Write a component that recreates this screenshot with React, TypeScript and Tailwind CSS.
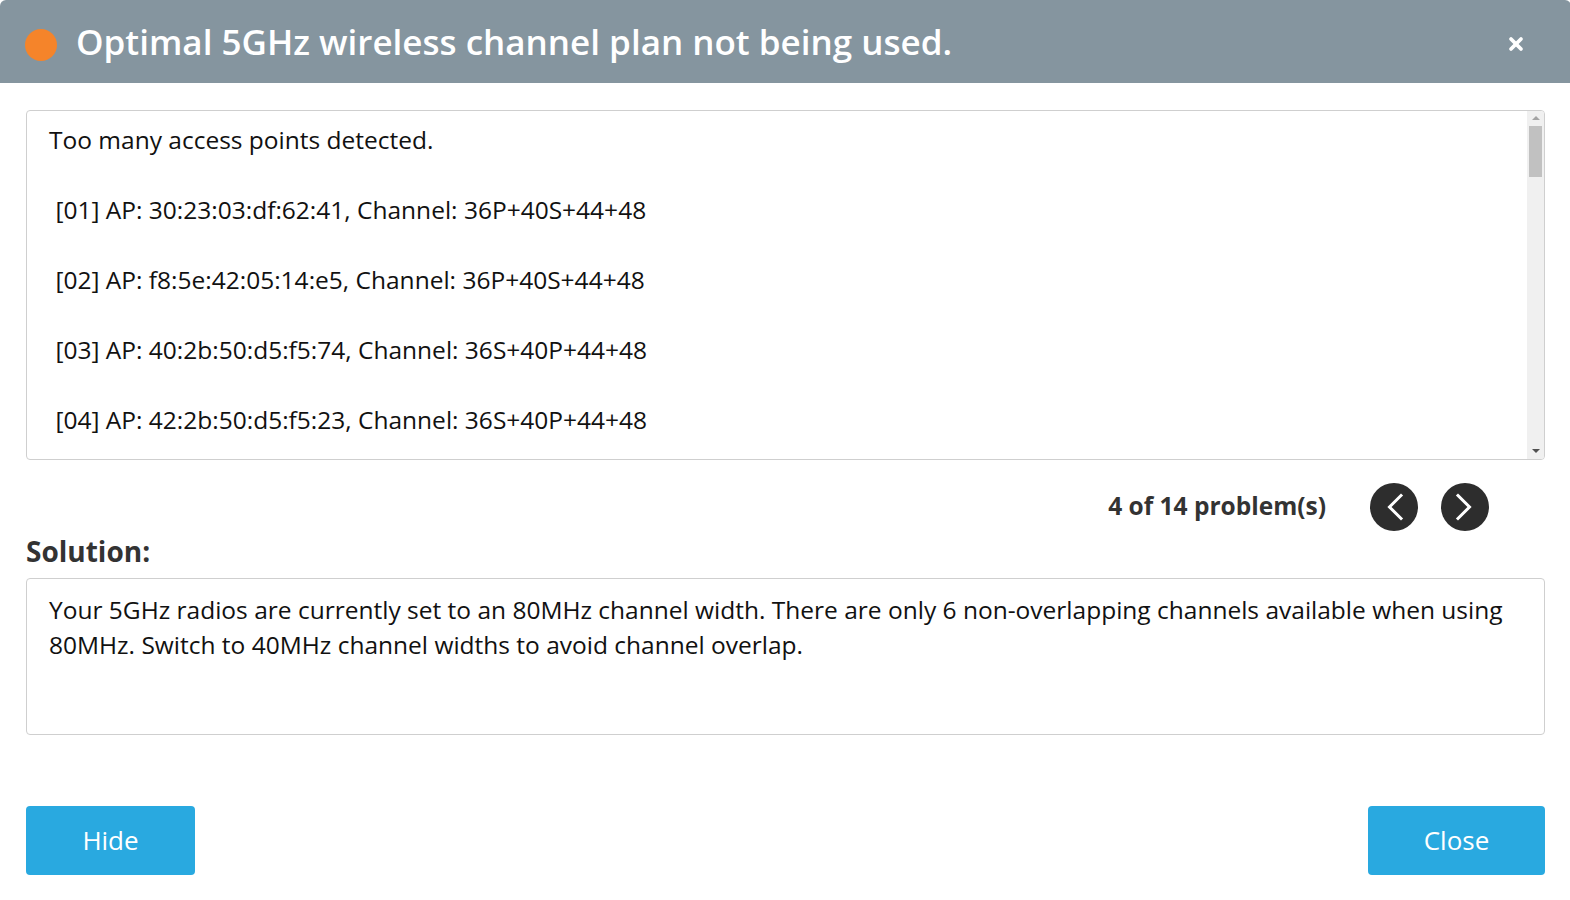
import { X } from "lucide-react";

const aps = [
  "[01] AP: 30:23:03:df:62:41, Channel: 36P+40S+44+48",
  "[02] AP: f8:5e:42:05:14:e5, Channel: 36P+40S+44+48",
  "[03] AP: 40:2b:50:d5:f5:74, Channel: 36S+40P+44+48",
  "[04] AP: 42:2b:50:d5:f5:23, Channel: 36S+40P+44+48",
];

function Arrow({ dir }: { dir: "left" | "right" }) {
  return (
    <svg width="48" height="48" viewBox="0 0 48 48" fill="none">
      <polyline
        points={dir === "left" ? "31,12.5 19.5,24 31,35.5" : "17,12.5 28.5,24 17,35.5"}
        stroke="white"
        strokeWidth="3"
        strokeLinecap="square"
        strokeLinejoin="miter"
      />
    </svg>
  );
}

export default function App() {
  return (
    <div
      className="w-full h-[900px] bg-white overflow-hidden"
      style={{ fontFamily: '"Open Sans", "Liberation Sans", sans-serif' }}
    >
      <div className="w-[1571px] h-[898px] rounded-md overflow-hidden bg-white flex flex-col">
        <div className="h-[83px] bg-[#85959f] flex items-center pl-[25px] pr-[45px]">
          <span className="w-[32px] h-[32px] rounded-full bg-[#f5842a] shrink-0 mt-[6px]" />
          <h1 className="ml-[19px] text-[35px] font-semibold text-white leading-none flex-1">
            Optimal 5GHz wireless channel plan not being used.
          </h1>
          <X className="w-[20px] h-[20px] text-white mt-[4px]" strokeWidth={4.5} />
        </div>

        <div className="px-[26px] pt-[27px] flex flex-col">
          <div className="h-[350px] border border-[#cfcfcf] rounded-[4px] flex overflow-hidden">
            <div className="flex-1 pl-[22px] pt-[11px] text-[24.5px] leading-[35px] text-[#111] whitespace-pre">
              <div>Too many access points detected.</div>
              {aps.map((a) => (
                <div key={a}>
                  <div>&nbsp;</div>
                  <div> {a}</div>
                </div>
              ))}
            </div>
            <div className="w-[17px] bg-[#f0f0f0] flex flex-col items-center">
              <span className="mt-[5px] w-0 h-0 border-l-[4px] border-r-[4px] border-b-[4px] border-l-transparent border-r-transparent border-b-[#a3a3a3]" />
              <span className="mt-[6px] w-[13px] h-[51px] bg-[#c1c1c1]" />
              <span className="flex-1" />
              <span className="mb-[6px] w-0 h-0 border-l-[4px] border-r-[4px] border-t-[4px] border-l-transparent border-r-transparent border-t-[#505050]" />
            </div>
          </div>

          <div className="flex items-center justify-end mt-[23px] pr-[56px]">
            <span className="text-[24.5px] font-bold text-[#333] mr-[44px] -mt-[1px]">4 of 14 problem(s)</span>
            <button className="w-[48px] h-[48px] rounded-full bg-[#2d2d2d] flex items-center justify-center">
              <Arrow dir="left" />
            </button>
            <button className="ml-[23px] w-[48px] h-[48px] rounded-full bg-[#2d2d2d] flex items-center justify-center">
              <Arrow dir="right" />
            </button>
          </div>

          <div className="text-[28px] font-bold text-[#333] leading-none mt-[6px]">Solution:</div>

          <div className="mt-[13px] h-[157px] border border-[#cfcfcf] rounded-[4px] px-[22px] pt-[13px] text-[24.5px] leading-[35px] text-[#111]">
            Your 5GHz radios are currently set to an 80MHz channel width. There are only 6 non-overlapping channels available when using 80MHz. Switch to 40MHz channel widths to avoid channel overlap.
          </div>

          <div className="flex justify-between mt-[71px]">
            <button className="w-[169px] h-[69px] rounded-[4px] bg-[#29a9e0] text-white text-[26px]">Hide</button>
            <button className="w-[177px] h-[69px] rounded-[4px] bg-[#29a9e0] text-white text-[26px]">Close</button>
          </div>
        </div>
      </div>
    </div>
  );
}
